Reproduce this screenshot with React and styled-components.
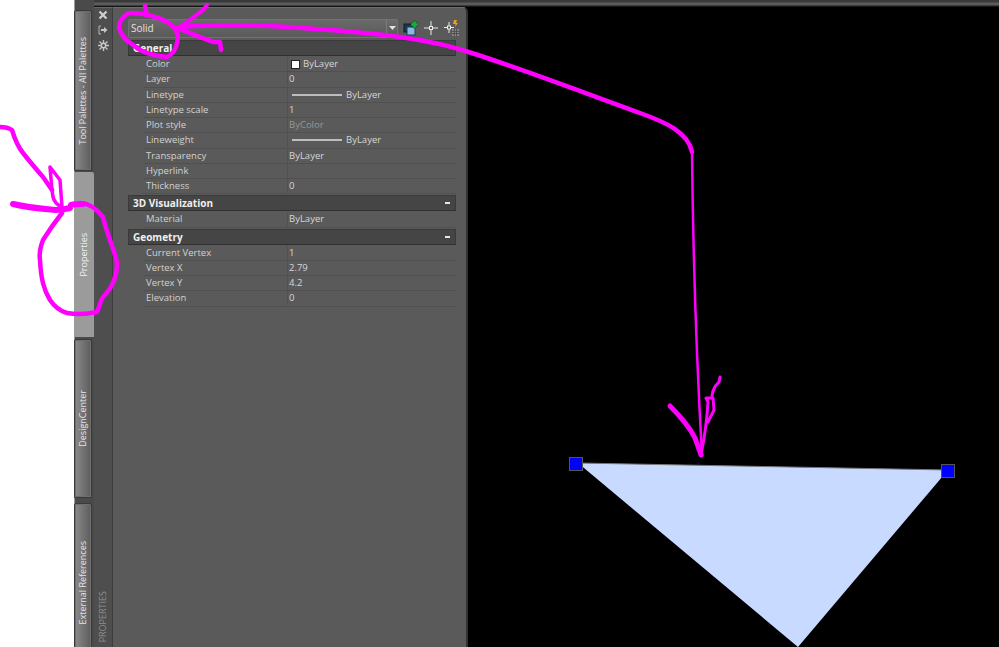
import React from 'react'
import styled, { createGlobalStyle } from 'styled-components'

const GlobalStyle = createGlobalStyle`
  html, body { margin: 0; padding: 0; background: #fff; }
  body { font-family: "Open Sans", "Liberation Sans", sans-serif; overflow: hidden; }
`

const sections = [
  {
    title: 'General',
    rows: [
      { label: 'Color', value: 'ByLayer', kind: 'swatch' },
      { label: 'Layer', value: '0' },
      { label: 'Linetype', value: 'ByLayer', kind: 'line' },
      { label: 'Linetype scale', value: '1' },
      { label: 'Plot style', value: 'ByColor', muted: true },
      { label: 'Lineweight', value: 'ByLayer', kind: 'line' },
      { label: 'Transparency', value: 'ByLayer' },
      { label: 'Hyperlink', value: '' },
      { label: 'Thickness', value: '0' },
    ],
  },
  {
    title: '3D Visualization',
    collapse: true,
    rows: [{ label: 'Material', value: 'ByLayer' }],
  },
  {
    title: 'Geometry',
    collapse: true,
    rows: [
      { label: 'Current Vertex', value: '1' },
      { label: 'Vertex X', value: '2.79' },
      { label: 'Vertex Y', value: '4.2' },
      { label: 'Elevation', value: '0' },
    ],
  },
]

const tabs = [
  { label: 'Tool Palettes - All Palettes', height: 161, top: 10 },
  { label: 'Properties', height: 165, top: 1, active: true },
  { label: 'DesignCenter', height: 159, top: 2 },
  { label: 'External References', height: 160, top: 5 },
]

function App() {
  return (
    <Page>
      <GlobalStyle />
      <Gutter />
      <Workspace>
        <TopEdge />
        <Columns>
          <TabStrip>
            {tabs.map(tab => (
              <Tab key={tab.label} $active={tab.active} $height={tab.height} $top={tab.top}>
                <TabLabel $active={tab.active}>{tab.label}</TabLabel>
              </Tab>
            ))}
          </TabStrip>
          <Handle>
            <HandleIcons>
              <svg width="10" height="10" viewBox="0 0 10 10">
                <path d="M1.5 1.5l7 7M8.5 1.5l-7 7" stroke="#d0d0d0" strokeWidth="2.2" />
              </svg>
              <svg width="10" height="10" viewBox="0 0 10 10">
                <path d="M3 1H1v8h2" stroke="#b4b4b4" strokeWidth="1" fill="none" />
                <path d="M3 4h3V2l3.5 3L6 8V6H3z" fill="#c8c8c8" />
              </svg>
              <svg width="11" height="11" viewBox="0 0 11 11">
                <circle cx="5.5" cy="5.5" r="2.2" stroke="#cdcdcd" strokeWidth="1.4" fill="none" />
                <path d="M5.5 0v3M5.5 8v3M0 5.5h3M8 5.5h3M1.5 1.5l2 2M7.5 7.5l2 2M9.5 1.5l-2 2M3.5 7.5l-2 2" stroke="#c4c4c4" strokeWidth="1.4" />
              </svg>
            </HandleIcons>
            <HandleTitle>PROPERTIES</HandleTitle>
          </Handle>
          <Panel>
            <Toolbar>
              <Combo>
                <ComboValue>Solid</ComboValue>
                <ComboArrow>
                  <svg width="7" height="4" viewBox="0 0 7 4"><path d="M0 0h7L3.5 4z" fill="#e2e2e2" /></svg>
                </ComboArrow>
              </Combo>
              <ToolIcon>
                <svg width="16" height="16" viewBox="0 0 16 16">
                  <rect x="1" y="4" width="8" height="8" fill="#17384f" stroke="#0c1d29" />
                  <rect x="4" y="7" width="8" height="8" fill="#8cb7e0" stroke="#1f3c55" />
                  <path d="M10 1h3v2h2v3h-2v2h-3V6H8V3h2z" fill="#10b52e" stroke="#0b5a1a" strokeWidth=".5" />
                </svg>
              </ToolIcon>
              <ToolIcon>
                <svg width="14" height="14" viewBox="0 0 14 14">
                  <path d="M7 0v5M7 9v5M0 7h5M9 7h5" stroke="#ececec" />
                  <rect x="5.5" y="5.5" width="3" height="3" fill="none" stroke="#ececec" />
                </svg>
              </ToolIcon>
              <ToolIcon>
                <svg width="16" height="16" viewBox="0 0 16 16">
                  <path d="M6 2v4M6 9v4M1 7.5h3M8 7.5h3" stroke="#ececec" />
                  <rect x="4.5" y="6" width="3" height="3" fill="none" stroke="#ececec" />
                  <path d="M11 0h3l-1 3h2l-3 4 .6-3H10z" fill="#e8a11f" />
                  <rect x="9" y="9" width="7" height="7" fill="#8c8c8c" />
                  <path d="M11.3 9v7M13.6 9v7M9 11.3h7M9 13.6h7" stroke="#4b4b4b" />
                </svg>
              </ToolIcon>
            </Toolbar>
            {sections.map(section => (
              <Section key={section.title}>
                <SectionHeader>
                  <SectionTitle>{section.title}</SectionTitle>
                  {section.collapse && <CollapseMark />}
                </SectionHeader>
                {section.rows.map(row => (
                  <Row key={row.label}>
                    <RowLabel>{row.label}</RowLabel>
                    <RowValue $muted={row.muted}>
                      {row.kind === 'swatch' && <Swatch />}
                      {row.kind === 'line' && <LineSample />}
                      {row.value}
                    </RowValue>
                  </Row>
                ))}
              </Section>
            ))}
          </Panel>
          <Canvas>
            <CanvasDrawing width="532" height="640" viewBox="467 7 532 640">
              <polygon points="578,463 948,470 798,647" fill="#c8daff" />
              <path d="M578 463L948 470" stroke="#777" strokeWidth="1" />
              <rect x="569.5" y="457.5" width="13" height="13" fill="#0000ff" stroke="#555" />
              <rect x="941.5" y="464.5" width="13" height="13" fill="#0000ff" stroke="#555" />
            </CanvasDrawing>
          </Canvas>
        </Columns>
      </Workspace>
      <Scribbles width="999" height="647" viewBox="0 0 999 647">
        <g fill="none" stroke="#ff00ff" strokeLinecap="round" strokeLinejoin="round">
          <path strokeWidth="4.5" d="M180 27C215 24 245 25 270 26C320 29 365 32 400 37C430 41 455 47 478 55C530 72 590 95 640 113C665 122 688 132 692 152" />
          <path strokeWidth="2.5" d="M692 152C693 250 696 350 702 455" />
          <path strokeWidth="4" d="M177 28C186 24 196 15 203 10L207 5" />
          <path strokeWidth="4.5" d="M177 28C190 33 202 38 213 42L220 42L221 50" />
          <path strokeWidth="4.5" d="M145 6L147 15C138 13 131 12 127 14C121 18 119 23 119 28C122 37 127 41 133 45C140 51 152 56 167 57C173 54 176 49 177 43C178 38 178 35 177 33C175 28 171 24 167 22C160 18 153 16 147 15" />
          <path strokeWidth="4.5" d="M62 213C55 222 48 232 43 240C40 248 39 254 40 260C41 280 44 290 50 300C54 306 60 311 67 313C78 315 88 314 97 312C100 306 100 301 103 297C110 290 117 278 117 263C114 248 107 235 103 217C96 208 88 203 80 203" />
          <path strokeWidth="4.5" d="M0 127C5 127 9 128 12 130C15 140 19 148 23 153C30 162 37 170 43 177L52 190" />
          <path strokeWidth="3.5" d="M52 190L50 167L60 180L62 207C57 205 54 201 53 197L52 190" />
          <path strokeWidth="6" d="M13 204C30 208 45 209 55 210C60 210 66 209 70 208L71 205C75 204 79 204 83 204" />
          <path strokeWidth="5" d="M670 406C680 416 690 428 695 438L701 455" />
          <path strokeWidth="3" d="M701 455C705 435 707 420 708 402L706 398H713L714 410L708 422" />
          <path strokeWidth="3" d="M712 396C713 388 716 385 719 382L720 377" />
        </g>
      </Scribbles>
    </Page>
  )
}

const Page = styled.div`
  position: relative;
  display: flex;
  width: 999px;
  height: 647px;
  overflow: hidden;
`

const Gutter = styled.div`
  width: 74px;
  flex: none;
  background: #fff;
`

const Workspace = styled.div`
  flex: 1;
  display: flex;
  flex-direction: column;
  min-width: 0;
`

const TopEdge = styled.div`
  height: 7px;
  flex: none;
  background: linear-gradient(#3a3a3a 0, #3a3a3a 2px, #5c5c5c 3px, #5c5c5c 5px, #1c1c1c 6px, #111 7px);
`

const Columns = styled.div`
  flex: 1;
  display: flex;
  min-height: 0;
  background: #000;
`

const TabStrip = styled.div`
  width: 20px;
  flex: none;
  display: flex;
  flex-direction: column;
  margin-top: -7px;
  background: #4a4a4a;
  box-shadow: inset 1px 0 0 #9a9a9a;
`

const Tab = styled.div`
  height: ${props => props.$height}px;
  margin-top: ${props => props.$top}px;
  flex: none;
  box-sizing: border-box;
  display: flex;
  justify-content: center;
  align-items: center;
  background: ${props => props.$active ? '#9b9b9b' : 'linear-gradient(90deg, #8a8a8a, #5c5c5c)'};
  border: ${props => props.$active ? 'none' : '1px solid #3a3a3a'};
  box-shadow: ${props => props.$active ? 'none' : 'inset 0 0 0 1px #6e6e6e'};
  border-radius: 2px 2px 0 0;
  width: ${props => props.$active ? '20px' : '18px'};
`

const TabLabel = styled.span`
  writing-mode: vertical-rl;
  transform: rotate(180deg);
  font-family: "Open Sans", "Liberation Sans", sans-serif;
  font-size: 9px;
  line-height: 12px;
  white-space: nowrap;
  color: ${props => props.$active ? '#f2f2f2' : '#e4e4e4'};
`

const Handle = styled.div`
  width: 19px;
  flex: none;
  display: flex;
  flex-direction: column;
  justify-content: space-between;
  align-items: center;
  background: #4e4e4e;
  border-top: 1px solid #666;
  border-right: 1px solid #3c3c3c;
  box-sizing: border-box;
  padding: 2px 0 5px;
`

const HandleIcons = styled.div`
  display: flex;
  flex-direction: column;
  align-items: center;
  gap: 5px;
`

const HandleTitle = styled.span`
  writing-mode: vertical-rl;
  transform: rotate(180deg);
  font-size: 9px;
  line-height: 12px;
  color: #8e8e8e;
`

const Panel = styled.div`
  width: 355px;
  flex: none;
  box-sizing: border-box;
  padding: 10px 10px 0 15px;
  background: #5a5a5a;
  border-top: 1px solid #6c6c6c;
  border-right: 2px solid #333;
  border-top-right-radius: 5px;
`

const Toolbar = styled.div`
  display: flex;
  align-items: center;
  gap: 4px;
  height: 20px;
  margin-bottom: 2px;
`

const Combo = styled.div`
  width: 270px;
  height: 19px;
  flex: none;
  box-sizing: border-box;
  display: flex;
  justify-content: space-between;
  margin-right: 1px;
  background: linear-gradient(#6a6a6a, #5a5a5a);
  border: 1px solid #737373;
  border-radius: 2px;
`

const ComboValue = styled.span`
  padding-left: 2px;
  font-size: 10px;
  line-height: 17px;
  color: #e2e2e2;
`

const ComboArrow = styled.span`
  width: 10px;
  display: flex;
  align-items: center;
  justify-content: center;
  border-left: 1px solid #7c7c7c;
`

const ToolIcon = styled.span`
  width: 16px;
  height: 16px;
  flex: none;
  display: flex;
  align-items: center;
  justify-content: center;
`

const Section = styled.div`
  margin-bottom: 1px;
`

const SectionHeader = styled.div`
  height: 16px;
  box-sizing: border-box;
  display: flex;
  justify-content: space-between;
  align-items: center;
  margin-bottom: 1px;
  padding: 0 5px 0 4px;
  background: #454545;
  border: 1px solid #3a3a3a;
  border-bottom-color: #303030;
`

const SectionTitle = styled.span`
  font-size: 10px;
  font-weight: 700;
  line-height: 14px;
  color: #efefef;
`

const CollapseMark = styled.span`
  width: 5px;
  height: 2px;
  background: #e6e6e6;
`

const Row = styled.div`
  height: 15.25px;
  box-sizing: border-box;
  margin-left: 15px;
  display: flex;
  align-items: center;
  border-bottom: 1px solid #505050;
`

const RowLabel = styled.span`
  width: 145px;
  flex: none;
  box-sizing: border-box;
  padding-left: 3px;
  font-size: 9.5px;
  line-height: 14px;
  color: #d2d2d2;
  border-right: 1px solid #515151;
`

const RowValue = styled.span`
  display: flex;
  align-items: center;
  padding-left: 1px;
  font-size: 9.5px;
  line-height: 14px;
  color: ${props => props.$muted ? '#979797' : '#d6d6d6'};
`

const Swatch = styled.span`
  width: 7px;
  height: 7px;
  margin-left: 2px;
  margin-right: 3px;
  background: #fff;
  border: 1px solid #222;
`

const LineSample = styled.span`
  width: 50px;
  height: 2px;
  margin-left: 3px;
  margin-right: 4px;
  background: #bdbdbd;
`

const Canvas = styled.div`
  position: relative;
  flex: 1;
  background: #000;
`

const CanvasDrawing = styled.svg`
  display: block;
  position: relative;
  left: -1px;
`

const Scribbles = styled.svg`
  position: absolute;
  top: 0;
  left: 0;
  pointer-events: none;
`

export default App
